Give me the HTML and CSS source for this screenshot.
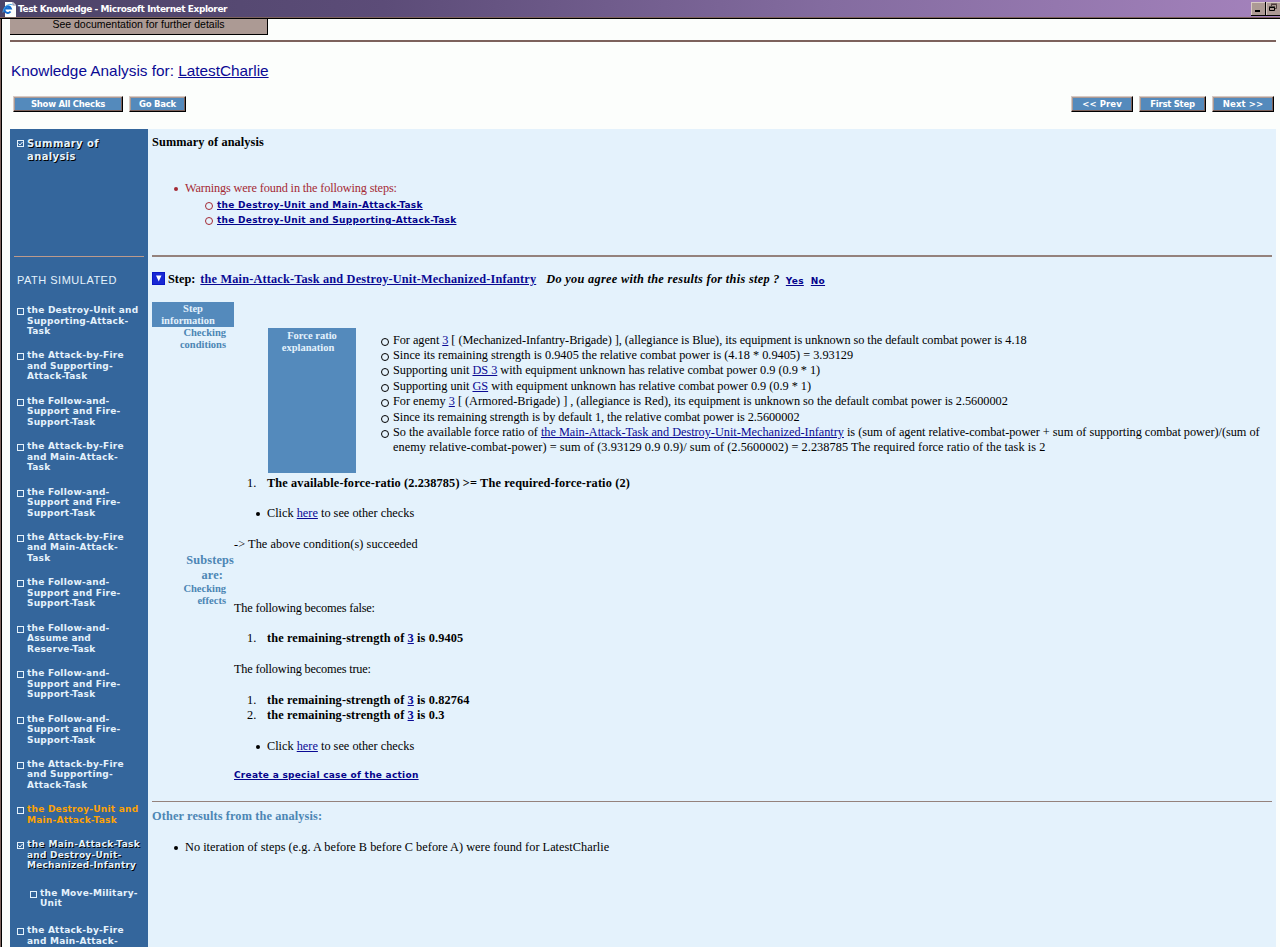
FILE: index.html
```html
<!DOCTYPE html>
<html lang="en">
<head>
<meta charset="utf-8">
<title>Test Knowledge</title>
<link rel="stylesheet" href="styles.css">
</head>
<body>
<header class="titlebar">
  <svg class="ie" width="16" height="17" viewBox="0 0 16 17"><path d="M3 1h8l3 3v12H3z" fill="#fcfefc"/><path d="M11 1v3h3" fill="none" stroke="#8a82a0"/><path d="M8.500 10.500a3.300 3.300 0 1 1 .4-3H3.500" fill="none" stroke="#146bd0" stroke-width="2"/><path d="M.8 11.500C2 5 7 2 10.500 4" fill="none" stroke="#45a5e6"/></svg>
  <span class="caption">Test Knowledge - Microsoft Internet Explorer</span>
  <div class="winbtns">
    <svg width="15" height="14" viewBox="0 0 15 14"><path d="M0 0h15v14H0z" fill="#000"/><path d="M0 0h14v13H0z" fill="#d8cac4"/><path d="M1 1h13v12H1z" fill="#ac9a94"/><path d="M4 8h5v2H4z" fill="#000"/></svg>
    <svg width="14" height="14" viewBox="0 0 14 14"><path d="M0 0h14v14H0z" fill="#000"/><path d="M0 0h14v13H0z" fill="#d8cac4"/><path d="M1 1h13v12H1z" fill="#ac9a94"/><path d="M5.500 4V2.500h5v4H9M5 2h6" fill="none" stroke="#4c3c3c"/><path d="M3.500 5.500h5v3h-5zM3 5h6" fill="none" stroke="#000"/></svg>
  </div>
</header>
<main class="page">
  <div class="doc">See documentation for further details</div>
  <div class="rule"></div>
  <h1 class="heading">Knowledge Analysis for: <a>LatestCharlie</a></h1>
  <nav class="toolbar">
    <span class="btn b1">Show All Checks</span><span class="btn b2">Go Back</span><span class="grow"></span>
    <span class="btn b3">&lt;&lt; Prev</span><span class="btn b4">First Step</span><span class="btn b5">Next &gt;&gt;</span>
  </nav>
  <div class="panel">
    <aside class="side">
      <div class="item summary on"><i class="box"><svg class="tick" viewBox="0 0 5 5"><path d="M.5 2.500 2 4 4.500 1"/></svg></i><span>Summary of<br>analysis</span></div>
      <div class="siderule"></div>
      <div class="path">PATH SIMULATED</div>
      <div class="item"><i class="box"></i><span>the Destroy-Unit and<br>Supporting-Attack-<br>Task</span></div>
      <div class="item"><i class="box"></i><span>the Attack-by-Fire<br>and Supporting-<br>Attack-Task</span></div>
      <div class="item"><i class="box"></i><span>the Follow-and-<br>Support and Fire-<br>Support-Task</span></div>
      <div class="item"><i class="box"></i><span>the Attack-by-Fire<br>and Main-Attack-<br>Task</span></div>
      <div class="item"><i class="box"></i><span>the Follow-and-<br>Support and Fire-<br>Support-Task</span></div>
      <div class="item"><i class="box"></i><span>the Attack-by-Fire<br>and Main-Attack-<br>Task</span></div>
      <div class="item"><i class="box"></i><span>the Follow-and-<br>Support and Fire-<br>Support-Task</span></div>
      <div class="item"><i class="box"></i><span>the Follow-and-<br>Assume and<br>Reserve-Task</span></div>
      <div class="item"><i class="box"></i><span>the Follow-and-<br>Support and Fire-<br>Support-Task</span></div>
      <div class="item"><i class="box"></i><span>the Follow-and-<br>Support and Fire-<br>Support-Task</span></div>
      <div class="item"><i class="box"></i><span>the Attack-by-Fire<br>and Supporting-<br>Attack-Task</span></div>
      <div class="item warn"><i class="box"></i><span>the Destroy-Unit and<br>Main-Attack-Task</span></div>
      <div class="item on"><i class="box"><svg class="tick" viewBox="0 0 5 5"><path d="M.5 2.500 2 4 4.500 1"/></svg></i><span><span class="first">the Main-Attack-Task</span><br>and Destroy-Unit-<br>Mechanized-Infantry</span></div>
      <div class="item sub"><i class="box"></i><span>the Move-Military-<br>Unit</span></div>
      <div class="item"><i class="box"></i><span>the Attack-by-Fire<br>and Main-Attack-</span></div>
    </aside>
    <section class="main">
      <h2 class="sum">Summary of analysis</h2>
      <div class="warnings">
        <div class="li disc warnhead">Warnings were found in the following steps:</div>
        <div class="li circ in"><a class="vl">the Destroy-Unit and Main-Attack-Task</a></div>
        <div class="li circ in"><a class="vl">the Destroy-Unit and Supporting-Attack-Task</a></div>
      </div>
      <div class="hr dark"></div>
      <div class="step"><svg width="13" height="13" viewBox="0 0 13 13"><path d="M0 0h13v13H0z" fill="#0a18c8"/><path d="M1 1h11v11H1z" fill="#1828d4"/><path d="M4 3.500h5.500L6.750 9.500z" fill="#fff"/></svg><b class="st">Step:</b><a class="sl">the Main-Attack-Task and Destroy-Unit-Mechanized-Infantry</a><em class="q">Do you agree with the results for this step ?</em><a class="vl yes">Yes</a><a class="vl no">No</a></div>
      <div class="body">
        <div class="labels">
          <div class="info">Step<br><span class="infol">information</span></div>
          <div class="lab">Checking<br>conditions</div>
          <div class="subs">Substeps<br><span class="are">are:</span></div>
          <div class="lab">Checking<br>effects</div>
        </div>
        <div class="content">
          <div class="force">
            <div class="fr">Force ratio<br><span class="ex">explanation</span></div>
            <div class="facts">
              <div class="li circ tight">For agent <a>3</a> [ (Mechanized-Infantry-Brigade) ], (allegiance is Blue), its equipment is unknown so the default combat power is 4.18</div>
              <div class="li circ">Since its remaining strength is 0.9405 the relative combat power is (4.18 * 0.9405) = 3.93129</div>
              <div class="li circ snug">Supporting unit <a>DS 3</a> with equipment unknown has relative combat power 0.9 (0.9 * 1)</div>
              <div class="li circ snug">Supporting unit <a>GS</a> with equipment unknown has relative combat power 0.9 (0.9 * 1)</div>
              <div class="li circ snug">For enemy <a>3</a> [ (Armored-Brigade) ] , (allegiance is Red), its equipment is unknown so the default combat power is 2.5600002</div>
              <div class="li circ tight">Since its remaining strength is by default 1, the relative combat power is 2.5600002</div>
              <div class="li circ snug">So the available force ratio of <a>the Main-Attack-Task and Destroy-Unit-Mechanized-Infantry</a> is (sum of agent relative-combat-power + sum of supporting combat power)/(sum of<br><span class="wide">enemy relative-combat-power) = sum of (3.93129 0.9 0.9)/ sum of (2.5600002) = 2.238785 The required force ratio of the task is 2</span></div>
            </div>
          </div>
          <div class="num"><span>1.</span><b>The available-force-ratio (2.238785) &gt;= The required-force-ratio (2)</b></div>
          <div class="li disc click">Click <a>here</a> to see other checks</div>
          <div class="above">-&gt; The above condition(s) succeeded</div>
          <div class="false">The following becomes false:</div>
          <div class="num gap"><span>1.</span><b>the remaining-strength of <a>3</a> is 0.9405</b></div>
          <div class="gap true">The following becomes true:</div>
          <div class="num gap"><span>1.</span><b>the remaining-strength of <a>3</a> is 0.82764</b></div>
          <div class="num"><span>2.</span><b>the remaining-strength of <a>3</a> is 0.3</b></div>
          <div class="li disc click">Click <a>here</a> to see other checks</div>
          <div class="create"><a class="vl">Create a special case of the action</a></div>
        </div>
      </div>
      <div class="hr"></div>
      <h3 class="other">Other results from the analysis:</h3>
      <div class="li disc last">No iteration of steps (e.g. A before B before C before A) were found for LatestCharlie</div>
    </section>
  </div>
</main>
</body>
</html>
```

FILE: styles.css
```css
*{box-sizing:border-box}
body{margin:0;height:947px;overflow:hidden;background:#fcfefc;font:12.3px/15.4px "Liberation Serif",serif;color:#000}
a{color:#0a0a94;text-decoration:underline}
.titlebar{height:19px;display:flex;align-items:center;padding:0 0 0 2px;background:linear-gradient(90deg,#4c4468,#5c4c78 30%,#846ca0 65%,#a482bc);border-bottom:1px solid #000;box-shadow:inset 0 -1px #7c625c}
.caption{font:bold 9px/16px "DejaVu Sans",sans-serif;letter-spacing:-.43px;color:#fff;flex:1}
.winbtns{display:flex;gap:0;margin-top:-1px}
.page{height:928px;border-left:1px solid #000;box-shadow:-1px 0 #7c625c;margin-left:1px;padding:0 4px 0 8px;overflow:hidden}
.doc{width:258px;height:16px;background:#ac9a94;border:solid #000;border-width:0 1px 1px 0;font:10.5px/11px "Liberation Sans",sans-serif;text-align:center}
.rule{height:2px;background:#7c625c;margin-top:5px}
.heading{font:15.35px/20px "Liberation Sans",sans-serif;color:#0a0a94;margin:19px 0 0 1px}
.toolbar{display:flex;margin-top:15px;padding:0 2px 0 3px;height:17px}
.grow{flex:1}
.btn{height:16px;border:1px solid;border-color:#d8cac4 #000 #000 #d8cac4;background:#548abc;box-shadow:inset -1px -1px #7c625c,inset 1px 1px #ac9a94;color:#fff;font:bold 8.5px/14px "DejaVu Sans",sans-serif;letter-spacing:-.25px;text-align:center}
.b1{width:110px;margin-right:6px}.b2{width:57px}.b3{width:62px}.b4{width:67px;margin:0 6px}.b5{width:62px}
.b3,.b5{letter-spacing:.1px}
.panel{display:flex;margin-top:16px;height:818px;background:#e4f2fc}
.side{width:138px;background:#34669c;padding:8px 4px 0 4px;color:#e4f2fc;flex:none;font:bold 9px/10.5px "DejaVu Sans",sans-serif;letter-spacing:.24px}
.item{display:flex;gap:3px;margin:0 0 13.9px 3px;white-space:nowrap}
.box{display:block;width:7px;height:7px;border:1px solid #e4f2fc;margin-top:3px;flex:none}
.tick{display:block;width:5px;height:5px;fill:none;stroke:#e4f2fc}
.on{text-shadow:1px 1px #000}
.first{letter-spacing:.36px}
.warn{color:#fca204}
.warn .box{border-color:#e4f2fc}
.summary{font-size:10px;line-height:13px;height:119px;margin-bottom:0;letter-spacing:.38px}
.siderule{height:1px;background:#bc9a8c}
.path{font:11px/14px "Liberation Sans",sans-serif;letter-spacing:.5px;margin:16px 0 18px 3px}
.sub{margin:17px 0 16.5px 16px}
.main{flex:1;padding:6px 4px 0 4px;white-space:nowrap}
.sum{font-size:12.3px;margin:0;letter-spacing:.1px}
.li{position:relative}
.disc::before,.circ::before{content:"";position:absolute;left:-12px;top:5px;width:6px;height:6px;border-radius:50%;border:1px solid}
.disc::before{background:currentColor;width:4px;height:4px;border:0;top:6px;left:-11px}
.circ::before{width:6px;height:6px}
.tight{letter-spacing:-.06px}.snug{letter-spacing:-.03px}.wide{letter-spacing:.06px}
.warnings{color:#a42a34;margin:31px 0 0 33px}
.warnhead{letter-spacing:-.15px}
.in{margin-left:32px;height:15.4px}
.vl{font:bold 9px/14px "DejaVu Sans",sans-serif;letter-spacing:.27px;color:#04048c}
.hr{height:1px;background:#94827c}
.dark{height:2px;margin-top:27px}
.step{display:flex;margin-top:15px;height:30px}
.st{margin:0 5px 0 3px}.sl,.q{font-weight:bold}.sl{letter-spacing:.17px}
.q{margin:0 6px 0 10px;letter-spacing:.31px}.yes{margin-right:7px}
.yes,.no{padding-top:2px}
.body{display:flex;height:499px}
.labels{width:82px;color:#4c86b4;font:bold 10.5px/12px "Liberation Serif",serif}
.info{background:#548abc;color:#e4f2fc;height:25px;text-align:center;padding-top:1px}
.infol{margin-right:10px}
.lab{text-align:right;padding-right:8px}
.subs{font-size:12.3px;line-height:15.4px;letter-spacing:.15px;text-align:right;margin-top:202px}
.are{margin-right:11px}
.force{display:flex;margin:26px 0 3px 34px}
.fr{width:88px;height:145px;background:#548abc;color:#e4f2fc;text-align:center;font:bold 10.5px/12px "Liberation Serif",serif;padding-top:2px}
.ex{margin-right:8px}
.facts{margin:5px 0 0 37px}
.num{display:flex}
.num span{width:33px;padding-left:13px}
.num b{letter-spacing:.13px}
.click{margin:15.4px 0 15.4px 33px}
.above{letter-spacing:.06px}
.false,.true{letter-spacing:-.18px}
.false{margin-top:48px}.gap{margin-top:15.4px}
.create{margin-top:-3px}
.other{font-size:12.3px;margin:7px 0 16px;color:#4c86b4;letter-spacing:.13px}
.last{margin-left:33px;letter-spacing:.02px}
```
